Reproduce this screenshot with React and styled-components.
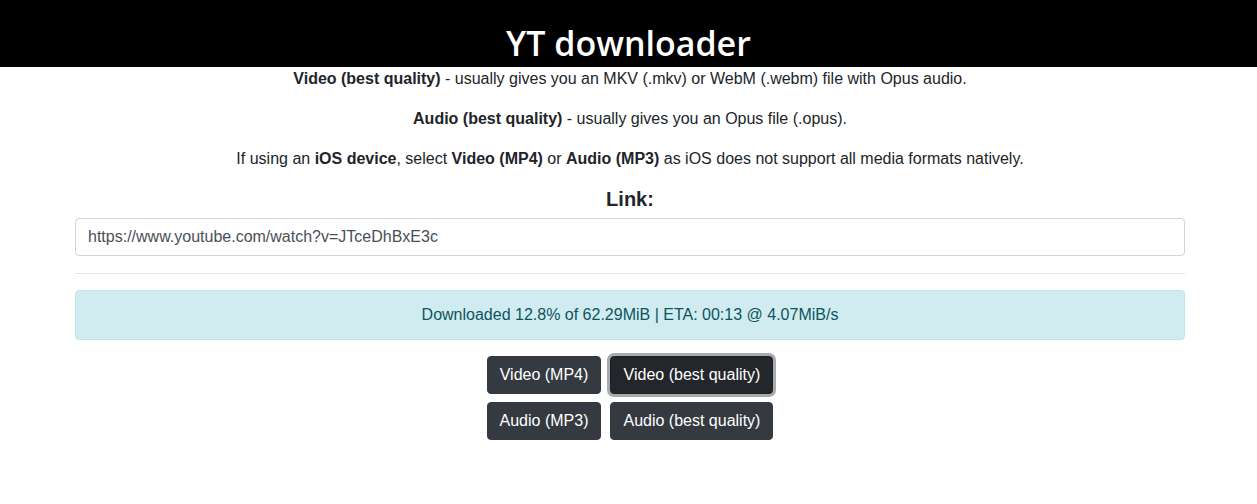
import React from "react";
import styled, { createGlobalStyle } from "styled-components";

const Global = createGlobalStyle`
  * { box-sizing: border-box; }
  body {
    margin: 0;
    font-family: "Liberation Sans", Arial, sans-serif;
    font-size: 16px;
    line-height: 1.5;
    color: #212529;
    background: #fff;
  }
`;

const Header = styled.header`
  background: #000;
  height: 67px;
  display: flex;
  justify-content: center;
  align-items: flex-end;
  overflow: hidden;
`;

const Title = styled.h1`
  margin: 0;
  font-family: "Open Sans", "Noto Sans", sans-serif;
  font-weight: 600;
  font-size: 34px;
  line-height: 48px;
  color: #fff;
`;

const Container = styled.main`
  width: 1110px;
  margin-left: calc(50% - 553.5px);
  text-align: center;
`;

const Para = styled.p`
  margin: 0 0 16px;
`;

const Label = styled.h2`
  margin: 4px 0 7px;
  font-size: 20px;
  line-height: 24px;
  font-weight: 700;
`;

const Input = styled.input`
  display: block;
  width: 100%;
  height: 38px;
  padding: 6px 12px;
  font-family: inherit;
  font-size: 16px;
  color: #495057;
  background: #fff;
  border: 1px solid #ced4da;
  border-radius: 4px;
  outline: none;
`;

const Rule = styled.hr`
  margin: 17px 0 16px;
  border: 0;
  border-top: 1px solid rgba(0, 0, 0, 0.1);
`;

const Alert = styled.div`
  padding: 12px 20px;
  margin-bottom: 16px;
  color: #0c5460;
  background: #d1ecf1;
  border: 1px solid #bee5eb;
  border-radius: 4px;
`;

const Buttons = styled.div`
  display: grid;
  grid-template-columns: auto auto;
  justify-content: center;
  gap: 8px 9px;
`;

const Button = styled.button`
  font-family: inherit;
  font-size: 16px;
  line-height: 24px;
  padding: 6px 12px;
  color: #fff;
  border-radius: 4px;
  cursor: pointer;
  background: ${(p) => (p.$active ? "#23272b" : "#343a40")};
  border: 1px solid ${(p) => (p.$active ? "#1d2124" : "#343a40")};
  box-shadow: ${(p) => (p.$active ? "0 0 0 3px rgba(82, 88, 93, 0.5)" : "none")};
`;

export default function App() {
  return (
    <>
      <Global />
      <Header>
        <Title>YT downloader</Title>
      </Header>
      <Container>
        <Para>
          <b>Video (best quality)</b> - usually gives you an MKV (.mkv) or WebM (.webm) file with Opus audio.
        </Para>
        <Para>
          <b>Audio (best quality)</b> - usually gives you an Opus file (.opus).
        </Para>
        <Para>
          If using an <b>iOS device</b>, select <b>Video (MP4)</b> or <b>Audio (MP3)</b> as iOS does not support all media formats natively.
        </Para>
        <Label>Link:</Label>
        <Input defaultValue="https://www.youtube.com/watch?v=JTceDhBxE3c" />
        <Rule />
        <Alert>Downloaded 12.8% of 62.29MiB | ETA: 00:13 @ 4.07MiB/s</Alert>
        <Buttons>
          <Button>Video (MP4)</Button>
          <Button $active>Video (best quality)</Button>
          <Button>Audio (MP3)</Button>
          <Button>Audio (best quality)</Button>
        </Buttons>
      </Container>
    </>
  );
}
